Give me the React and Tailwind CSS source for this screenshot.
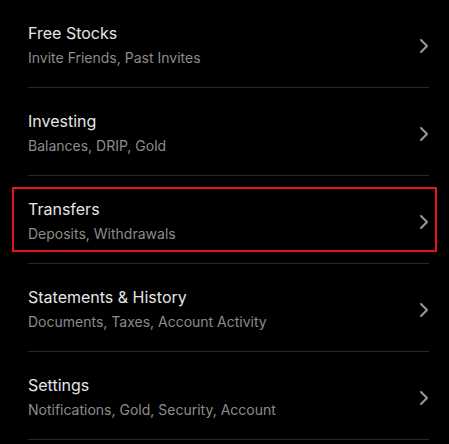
const items = [
  { title: "Free Stocks", sub: "Invite Friends, Past Invites" },
  { title: "Investing", sub: "Balances, DRIP, Gold" },
  { title: "Transfers", sub: "Deposits, Withdrawals", active: true },
  { title: "Statements & History", sub: "Documents, Taxes, Account Activity" },
  { title: "Settings", sub: "Notifications, Gold, Security, Account" },
]

function Chevron() {
  return (
    <svg width="10" height="16" viewBox="0 0 10 16" fill="none" className="shrink-0 mt-[5px]">
      <path d="M2 2l6 6-6 6" stroke="#9a9a9a" strokeWidth="2" strokeLinecap="round" strokeLinejoin="round" />
    </svg>
  )
}

export default function App() {
  return (
    <div className="w-[449px] h-[444px] bg-black overflow-hidden font-['Inter',sans-serif]">
      {items.map((item) => (
        <div key={item.title} className="relative">
          <div className="ml-[28px] mr-[20px] h-[88px] border-b border-[#282828] flex items-center justify-between">
            <div className="flex flex-col gap-[5px] pt-[4px]">
              <span className="text-[16px] leading-5 text-[#e6e6e6]">{item.title}</span>
              <span className="text-[14px] leading-5 text-[#8c8c8c]">{item.sub}</span>
            </div>
            <Chevron />
          </div>
          {item.active && (
            <div className="absolute left-[12px] right-[12px] top-[11px] bottom-[12px] border-2 border-[#e8141c]" />
          )}
        </div>
      ))}
    </div>
  )
}
